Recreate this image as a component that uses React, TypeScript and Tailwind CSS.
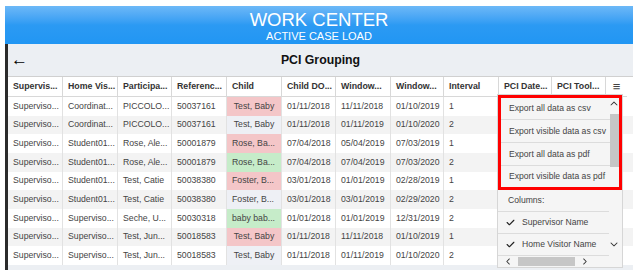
import { FaCheck, FaChevronUp, FaChevronDown, FaChevronLeft, FaChevronRight } from "react-icons/fa6";

const widths = [55, 55, 54, 55, 55, 54, 55, 53, 55, 53, 54];

const headers = [
  "Supervis...",
  "Home Vis...",
  "Participa...",
  "Referenc...",
  "Child",
  "Child DO...",
  "Window...",
  "Window...",
  "Interval",
  "PCI Date...",
  "PCI Tool...",
];

type Row = {
  cells: string[];
  child: string;
  tone: "pink" | "green" | "gray";
  center: boolean;
};

const rows: Row[] = [
  { cells: ["Superviso...", "Coordinat...", "PICCOLO...", "50037161", "", "01/11/2018", "11/11/2018", "01/10/2019", "1"], child: "Test, Baby", tone: "pink", center: true },
  { cells: ["Superviso...", "Coordinat...", "PICCOLO...", "50037161", "", "01/11/2018", "01/11/2019", "01/10/2020", "2"], child: "Test, Baby", tone: "gray", center: true },
  { cells: ["Superviso...", "Student01...", "Rose, Ale...", "50001879", "", "07/04/2018", "05/04/2019", "07/03/2019", "1"], child: "Rose, Ba...", tone: "pink", center: false },
  { cells: ["Superviso...", "Student01...", "Rose, Ale...", "50001879", "", "07/04/2018", "07/04/2019", "07/03/2020", "2"], child: "Rose, Ba...", tone: "green", center: false },
  { cells: ["Superviso...", "Student01...", "Test, Catie", "50038380", "", "03/01/2018", "01/01/2019", "02/28/2019", "1"], child: "Foster, B...", tone: "pink", center: false },
  { cells: ["Superviso...", "Student01...", "Test, Catie", "50038380", "", "03/01/2018", "03/01/2019", "02/29/2020", "2"], child: "Foster, B...", tone: "gray", center: false },
  { cells: ["Superviso...", "Superviso...", "Seche, U...", "50030318", "", "01/01/2018", "01/01/2019", "12/31/2019", "2"], child: "baby bab...", tone: "green", center: false },
  { cells: ["Superviso...", "Superviso...", "Test, Jun...", "50018583", "", "01/11/2018", "11/11/2018", "01/10/2019", "1"], child: "Test, Baby", tone: "pink", center: true },
  { cells: ["Superviso...", "Superviso...", "Test, Jun...", "50018583", "", "01/11/2018", "01/11/2019", "01/10/2020", "2"], child: "Test, Baby", tone: "gray", center: true },
];

const toneClass = {
  pink: "bg-[#f4c6c8]",
  green: "bg-[#c6ecc9]",
  gray: "bg-[#eef0f5]",
};

const ExportMenu = () => {
  return (
    <div className="absolute left-[497px] top-[94px] flex h-[174px] w-[126px] flex-col border border-[#d6d6d6] bg-[#f5f5f5] text-[8.6px] whitespace-nowrap text-[#444]">
      <div className="flex flex-1 flex-col pr-[13px]">
        <div className="-mr-[13px] flex flex-col border-[3px] border-[#ff0000]">
          <div className="flex h-[22px] items-center border-b border-[#dcdcdc] pl-[8px]">Export all data as csv</div>
          <div className="flex h-[23px] items-center border-b border-[#dcdcdc] pl-[8px]">Export visible data as csv</div>
          <div className="flex h-[23px] items-center border-b border-[#dcdcdc] pl-[8px]">Export all data as pdf</div>
          <div className="flex h-[21px] items-center pl-[8px]">Export visible data as pdf</div>
        </div>
        <div className="flex h-[22px] items-center border-b border-[#dcdcdc] pl-[10px]">Columns:</div>
        <div className="flex h-[22px] items-center gap-[7px] border-b border-[#dcdcdc] pl-[8px]">
          <FaCheck className="text-[9px] text-[#222]" />
          Supervisor Name
        </div>
        <div className="flex h-[22px] items-center gap-[7px] border-b border-[#dcdcdc] pl-[8px]">
          <FaCheck className="text-[9px] text-[#222]" />
          Home Visitor Name
        </div>
      </div>
      <div className="flex h-[15px] items-center gap-[6px] pl-[7px] pr-[34px]">
        <FaChevronLeft className="text-[7px] text-[#333]" />
        <div className="h-[9px] flex-1 bg-[#c6c6c6]" />
        <FaChevronRight className="text-[7px] text-[#333]" />
      </div>
      <div className="absolute right-[3px] top-[3px] flex h-[150px] w-[10px] flex-col items-center">
        <FaChevronUp className="mt-[2px] text-[8px] text-[#333]" />
        <div className="mt-[6px] h-[53px] w-[9px] bg-[#c6c6c6]" />
        <div className="flex-1" />
        <FaChevronDown className="text-[8px] text-[#333]" />
      </div>
    </div>
  );
};

export default function App() {
  return (
    <div
      className="relative h-[276px] w-[633px] overflow-hidden bg-white pl-[5px] pt-[6px]"
      style={{ fontFamily: '"Liberation Sans", Arial, sans-serif' }}
    >
      <div className="flex h-[38px] flex-col items-center bg-gradient-to-b from-[#6cb8f7] via-[#2b9af3] to-[#2196f3] text-white">
        <div className="mt-[3px] text-[18.5px] leading-[21px]">WORK CENTER</div>
        <div className="text-[11px] leading-[13px]">ACTIVE CASE LOAD</div>
      </div>
      <div className="flex h-[226px] flex-col border-l-[3px] border-[#2b2b2b] bg-[#eceff3]">
        <div className="relative flex h-[33px] items-center justify-center border-b border-[#d0d0d0]">
          <span className="absolute left-[3px] top-[3px] text-[17px] font-bold text-black">←</span>
          <span className="text-[12.3px] font-bold text-[#111]">PCI Grouping</span>
        </div>
        <div className="flex h-[20px] bg-white text-[8.8px] font-bold whitespace-nowrap text-[#333]">
          {headers.map((h, i) => (
            <div
              key={i}
              style={{ width: widths[i] }}
              className="flex shrink-0 items-center overflow-hidden border-b border-r border-[#d8d8d8] pl-[5px]"
            >
              {h}
            </div>
          ))}
          <div className="flex w-[21px] shrink-0 items-center justify-center border-b border-[#d8d8d8] text-[13px] font-normal text-[#444]">
            ≡
          </div>
        </div>
        {rows.map((r, ri) => (
          <div
            key={ri}
            className={`flex h-[18.67px] text-[8.7px] whitespace-nowrap text-[#444] ${ri % 2 === 0 ? "bg-white" : "bg-[#f3f3f3]"}`}
          >
            {r.cells.map((c, ci) => (
              <div
                key={ci}
                style={{ width: widths[ci] }}
                className={`flex shrink-0 items-center overflow-hidden border-r border-[#e2e2e2] ${
                  ci === 4
                    ? `${toneClass[r.tone]} ${r.center ? "justify-center" : "pl-[5px]"}`
                    : "pl-[5px]"
                }`}
              >
                {ci === 4 ? r.child : c}
              </div>
            ))}
            <div className="flex-1" />
          </div>
        ))}
        <div className="flex-1" />
      </div>
      <ExportMenu />
    </div>
  );
}
